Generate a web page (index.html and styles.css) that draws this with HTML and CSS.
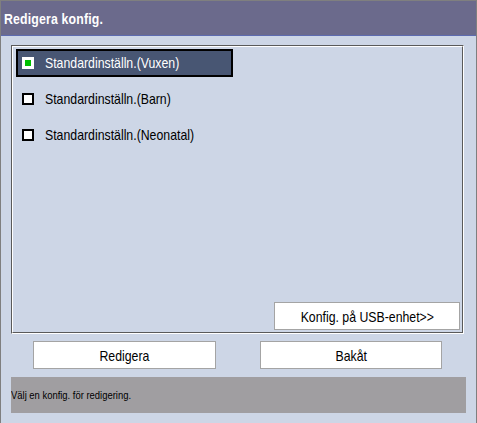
FILE: index.html
```html
<!DOCTYPE html>
<html lang="sv">
<head>
<meta charset="utf-8">
<title>Redigera konfig.</title>
<link rel="stylesheet" href="styles.css">
</head>
<body>
<div class="window">
  <div class="titlebar"><span class="narrow">Redigera konfig.</span></div>
  <div class="content">
    <div class="panel">
      <div class="panel-inner">
        <div class="list">
          <div class="row selected"><span class="check on"><span class="dot"></span></span><span class="label narrow">Standardinställn.(Vuxen)</span></div>
          <div class="row"><span class="check"></span><span class="label narrow">Standardinställn.(Barn)</span></div>
          <div class="row"><span class="check"></span><span class="label narrow">Standardinställn.(Neonatal)</span></div>
        </div>
        <button class="btn usb"><span class="narrow center">Konfig. på USB-enhet&gt;&gt;</span></button>
      </div>
    </div>
    <div class="actions">
      <button class="btn action"><span class="narrow center">Redigera</span></button>
      <button class="btn action back"><span class="narrow center">Bakåt</span></button>
    </div>
    <div class="status"><span class="narrow">Välj en konfig. för redigering.</span></div>
  </div>
</div>
</body>
</html>
```

FILE: styles.css
```css
html, body {
  margin: 0;
  padding: 0;
  background: #cdd6e6;
}
body {
  font-family: "Liberation Sans", Arial, sans-serif;
}
.narrow {
  display: inline-block;
  white-space: nowrap;
  transform: scaleX(0.82);
  transform-origin: left center;
}
.narrow.center {
  transform-origin: center center;
}
.window {
  width: 477px;
  height: 423px;
  box-sizing: border-box;
  border: 1px solid #7f7f7f;
  border-bottom: none;
  background: #cdd6e6;
  overflow: hidden;
}
.titlebar {
  height: 35px;
  box-sizing: border-box;
  background: #6b6a8c;
  border-bottom: 1px solid #5d6bb0;
  color: #ffffff;
  font-weight: bold;
  font-size: 15px;
  letter-spacing: 0.2px;
  padding: 10px 0 0 3px;
  line-height: 16px;
}
.content {
  padding: 9px 0 0 10px;
}
.panel {
  width: 453px;
  height: 289px;
  box-sizing: border-box;
  border: 1px solid;
  border-color: #5a5a5a #ffffff #ffffff #5a5a5a;
  display: flex;
}
.panel-inner {
  flex: 1;
  border: 1px solid;
  border-color: #ffffff #5a5a5a #5a5a5a #ffffff;
  padding: 2px 2px 2px 3px;
  display: flex;
  flex-direction: column;
}
.list {
  display: flex;
  flex-direction: column;
  gap: 8px;
}
.row {
  width: 217px;
  height: 28px;
  box-sizing: border-box;
  border: 2px solid transparent;
  display: flex;
  align-items: center;
  padding-left: 4px;
  font-size: 15px;
  color: #000000;
}
.row.selected {
  background: #485673;
  border-color: #000000;
  color: #ffffff;
}
.check {
  width: 12px;
  height: 12px;
  flex: none;
  box-sizing: border-box;
  border: 2px solid #000000;
  background: #ffffff;
  margin-right: 11px;
  margin-top: -1px;
  display: flex;
  align-items: center;
  justify-content: center;
}
.check.on {
  border-color: #ffffff;
}
.dot {
  width: 6px;
  height: 6px;
  background: #00c000;
}
.label {
  line-height: 16px;
}
.btn {
  font-family: inherit;
  font-size: 15px;
  color: #000000;
  background: #ffffff;
  border: 1px solid #a4a4a4;
  border-radius: 0;
  margin: 0;
  padding: 0;
  height: 28px;
  box-sizing: border-box;
  display: flex;
  align-items: center;
  justify-content: center;
}
.usb {
  margin-top: auto;
  margin-left: auto;
  width: 186px;
}
.actions {
  display: flex;
  gap: 44px;
  padding-left: 22px;
  margin-top: 7px;
}
.action {
  width: 183px;
}
.action.back {
  width: 182px;
}
.status {
  margin-top: 8px;
  width: 455px;
  height: 36px;
  background: #a09ea1;
  color: #000000;
  font-size: 11.5px;
  display: flex;
  align-items: center;
}
```
